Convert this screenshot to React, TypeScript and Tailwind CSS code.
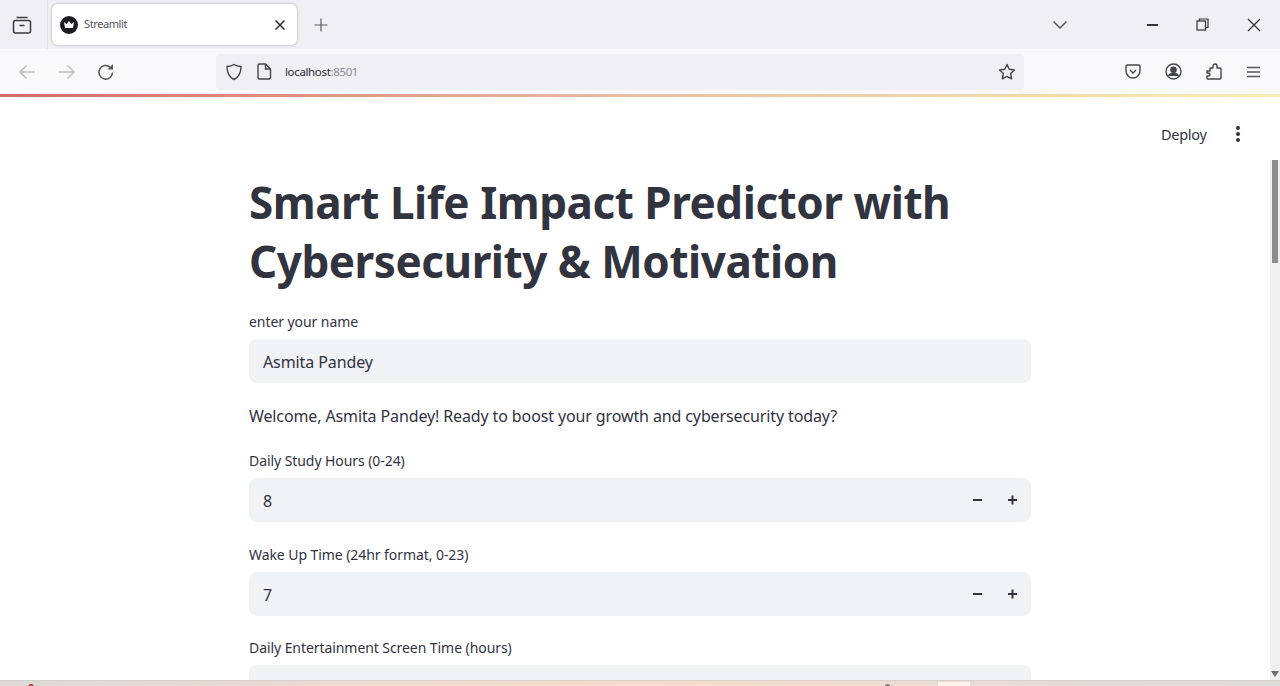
const font = { fontFamily: '"Noto Sans", sans-serif' };

const Field = ({ label, value, stepper }: { label: string; value?: string; stepper?: boolean }) => (
  <div className="flex flex-col">
    <label className="text-[14px] leading-[20px] text-[#31333f] tracking-[-0.07px] mb-[7px]">{label}</label>
    <div className="h-[44px] rounded-lg bg-[#f0f2f6] flex items-center pl-[14px] shrink-0">
      <span className="flex-1 pt-[2px] text-[16px] text-[#31333f] tracking-[-0.1px]">{value}</span>
      {stepper && (
        <div className="flex items-center text-[#31333f] mr-[1px]">
          <svg width="35" height="14" viewBox="0 0 35 14"><path d="M13 7h9" stroke="currentColor" strokeWidth="2" /></svg>
          <svg width="35" height="14" viewBox="0 0 35 14"><path d="M13 7h9M17.500 2.500v9" stroke="currentColor" strokeWidth="2" /></svg>
        </div>
      )}
    </div>
  </div>
);

export default function App() {
  return (
    <div className="w-[1280px] h-[686px] overflow-hidden flex flex-col bg-white font-['Noto_Sans',sans-serif]">
      {/* tab strip */}
      <div className="h-[49px] bg-[#f0f0f4] flex items-center shrink-0">
        <div className="w-[48px] h-full flex items-center justify-center border-r border-[#e0e0e6] pr-[4px]">
          <svg width="20" height="20" viewBox="0 0 20 20" fill="none" stroke="#3a3a42" strokeWidth="1.5">
            <path d="M4.500 2.500h11" />
            <rect x="1.500" y="5.500" width="17" height="12.500" rx="2" />
            <path d="M7.500 10.500h5" />
          </svg>
        </div>
        <div className="ml-[4px] w-[245px] h-[41px] bg-white rounded-md shadow-[0_0_3px_rgba(0,0,0,0.3)] flex items-center pl-[8px] pr-[8px]">
          <svg width="18" height="18" viewBox="0 0 18 18">
            <circle cx="9" cy="9" r="9" fill="#1c1c22" />
            <path d="M4 6l2.500 2L9 5l2.500 3L14 6l-1 6H5z" fill="#fff" />
          </svg>
          <span className="ml-[6px] flex-1 text-[11px] text-[#55555c] tracking-[-0.4px]">Streamlit</span>
          <svg width="18" height="18" viewBox="0 0 18 18" stroke="#2b2a33" strokeWidth="1.500"><path d="M4.500 4.500l9 9M13.500 4.500l-9 9" /></svg>
        </div>
        <svg className="ml-[16px]" width="16" height="16" viewBox="0 0 16 16" stroke="#5b5b63" strokeWidth="1.200"><path d="M8 1.500v13M1.500 8h13" /></svg>
        <div className="flex-1" />
        <svg className="mr-[79px]" width="16" height="10" viewBox="0 0 16 10" fill="none" stroke="#55555c" strokeWidth="1.500"><path d="M1.500 1.500L8 8l6.500-6.500" /></svg>
        <svg className="mr-[38px]" width="11" height="4" viewBox="0 0 11 4" stroke="#222" strokeWidth="1.800"><path d="M0 2h11" /></svg>
        <svg className="mr-[38px]" width="13" height="13" viewBox="0 0 13 13" fill="none" stroke="#333" strokeWidth="1.200">
          <rect x="1" y="3" width="8.500" height="9" />
          <path d="M3.500 3V1h8.500v8.500H9.500" />
        </svg>
        <svg className="mr-[19px]" width="14" height="14" viewBox="0 0 14 14" stroke="#333" strokeWidth="1.300"><path d="M1 1l12 12M13 1L1 13" /></svg>
      </div>

      {/* toolbar */}
      <div className="h-[45px] bg-[#f9f9fb] flex items-center shrink-0 relative">
        <svg className="ml-[18px]" width="18" height="16" viewBox="0 0 18 16" fill="none" stroke="#bcbcc0" strokeWidth="1.400"><path d="M17 8H2M8.500 1.500L2 8l6.500 6.500" /></svg>
        <svg className="ml-[22px]" width="18" height="16" viewBox="0 0 18 16" fill="none" stroke="#bcbcc0" strokeWidth="1.400"><path d="M1 8h15M9.500 1.500L16 8l-6.500 6.500" /></svg>
        <svg className="ml-[21px]" width="18" height="18" viewBox="0 0 18 18" fill="none" stroke="#55555c" strokeWidth="1.500">
          <path d="M15.500 9.500a6.800 6.800 0 1 1-2.300-5.300" />
          <path d="M16 1v5.500h-5.500z" fill="#55555c" stroke="none" />
        </svg>
        <div className="ml-[101px] w-[808px] h-[36px] bg-[#f0f0f4] rounded-[4px] flex items-center pl-[9px]">
          <svg width="18" height="18" viewBox="0 0 18 18" fill="none" stroke="#44444c" strokeWidth="1.400"><path d="M9 1.500c2 1.300 4.500 1.800 7 2 0 6-2 10.500-7 13-5-2.500-7-7-7-13 2.500-.2 5-.7 7-2z" /></svg>
          <svg className="ml-[14px]" width="15" height="17" viewBox="0 0 15 17" fill="none" stroke="#44444c" strokeWidth="1.400"><path d="M2.500 1h6l5 5v8.500a1.500 1.500 0 0 1-1.500 1.500H2.500A1.500 1.500 0 0 1 1 14.500v-12A1.500 1.500 0 0 1 2.500 1zM8.500 1v5h5" /></svg>
          <span className="ml-[13px] flex-1 text-[11.500px] text-[#2b2a33] tracking-[-0.35px]">localhost<span className="text-[#8a8a90]">:8501</span></span>
          <svg className="mr-[8px]" width="18" height="18" viewBox="0 0 18 18" fill="none" stroke="#44444c" strokeWidth="1.400"><path d="M9 1.500l2.300 4.800 5.200.7-3.800 3.600.9 5.200L9 13.300l-4.600 2.500.9-5.200L1.500 7l5.200-.7z" strokeLinejoin="round" /></svg>
        </div>
        <div className="flex-1" />
        <svg className="mr-[24px]" width="16" height="15" viewBox="0 0 16 15" fill="none" stroke="#44444c" strokeWidth="1.400"><path d="M2.500 1h11A1.500 1.500 0 0 1 15 2.500V7a7 7 0 0 1-14 0V2.500A1.500 1.500 0 0 1 2.500 1z" /><path d="M5 6l3 3 3-3" /></svg>
        <svg className="mr-[24px]" width="17" height="17" viewBox="0 0 17 17" fill="none" stroke="#44444c" strokeWidth="1.400"><circle cx="8.500" cy="8.500" r="7.500" /><circle cx="8.500" cy="6.800" r="2.600" fill="#44444c" /><path d="M3.500 13c1-2 3-2.700 5-2.700s4 .7 5 2.700" fill="#44444c" /></svg>
        <svg className="mr-[25px]" width="16" height="17" viewBox="0 0 16 17" fill="none" stroke="#44444c" strokeWidth="1.400" strokeLinejoin="round"><path d="M1 8h3V5h3V3a2 2 0 0 1 4 0v2h3a1 1 0 0 1 1 1v9a1 1 0 0 1-1 1H2a1 1 0 0 1-1-1v-2h1.500a1.500 1.500 0 0 0 0-3H1z" /></svg>
        <svg className="mr-[20px]" width="13" height="12" viewBox="0 0 13 12" stroke="#55555c" strokeWidth="1.300"><path d="M0 1.500h13M0 6h13M0 10.500h13" /></svg>
      </div>

      {/* firefox loading gradient */}
      <div className="h-[3px] shrink-0 bg-gradient-to-r from-[#cf6b66] via-[#e8c0a4] to-[#f5edb4]" />

      {/* page */}
      <div className="flex-1 relative overflow-hidden bg-white" style={font}>
        <div className="absolute left-[1161px] top-[25px] text-[14.500px] leading-[24px] text-[#31333f] tracking-[-0.3px]">Deploy</div>
        <svg className="absolute left-[1235px] top-[28px]" width="6" height="18" viewBox="0 0 6 18" fill="#31333f">
          <circle cx="3" cy="3" r="2" /><circle cx="3" cy="9" r="2" /><circle cx="3" cy="15" r="2" />
        </svg>
        <div className="absolute right-0 top-[63px] bottom-0 w-[10px] bg-[#f0f0f0]">
          <div className="ml-[2px] w-[6px] h-[103px] bg-[#8c8c8c]" />
          <div className="absolute bottom-[3px] left-[1px] w-0 h-0 border-x-[4px] border-x-transparent border-t-[6px] border-t-[#6e6e6e]" />
        </div>

        <div className="w-[782px] mx-auto pt-[76px]">
          <h1 className="text-[44px] leading-[59px] font-bold text-[#31333f] tracking-[-0.46px]">
            Smart Life Impact Predictor with Cybersecurity &amp; Motivation
          </h1>
          <div className="mt-[21px]">
            <Field label="enter your name" value="Asmita Pandey" />
          </div>
          <p className="mt-[21px] text-[16px] leading-[24px] text-[#31333f] tracking-[-0.12px]">
            Welcome, Asmita Pandey! Ready to boost your growth and cybersecurity today?
          </p>
          <div className="mt-[23px] flex flex-col gap-[22.5px]">
            <Field label="Daily Study Hours (0-24)" value="8" stepper />
            <Field label="Wake Up Time (24hr format, 0-23)" value="7" stepper />
            <Field label="Daily Entertainment Screen Time (hours)" />
          </div>
        </div>
      </div>

      {/* taskbar sliver */}
      <div className="h-[6px] shrink-0 relative overflow-hidden border-t border-[#d8d0cc] bg-gradient-to-r from-[#dedad8] via-[#f8dccb] to-[#dcdcdc]">
        <div className="absolute left-[28px] top-[3px] w-[6px] h-[6px] rounded-full bg-[#b8383a]" />
        <div className="absolute left-[885px] top-[3px] w-[5px] h-[5px] rounded-full bg-[#777]" />
        <div className="absolute left-[938px] top-[1px] w-[32px] h-[6px] bg-[#fff3ec]" />
      </div>
    </div>
  );
}
